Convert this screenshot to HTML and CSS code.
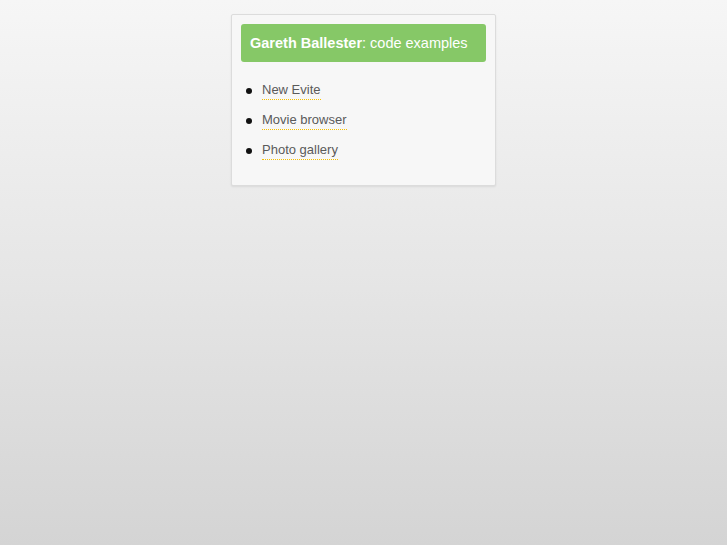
FILE: index.html
```html
<!DOCTYPE html>
<html>
  <head>
    <title>Gareth Ballester: code examples</title>
    <link rel="stylesheet" href="styles.css">
  </head>
  <body>
    <div class="panel">
      <h1 class="panel-title"><strong>Gareth Ballester</strong>: code examples</h1>
      <ul class="links">
        <li><a href="#">New Evite</a></li>
        <li><a href="#">Movie browser</a></li>
        <li><a href="#">Photo gallery</a></li>
      </ul>
    </div>
  </body>
</html>
```
FILE: styles.css
```css
html {
  min-height: 100%;
  background: linear-gradient(to bottom, #f6f6f6 0%, #e6e6e6 50%, #d4d4d4 100%);
}
body {
  font-family: "Liberation Sans", Arial, sans-serif;
  margin: 0;
  padding: 14px 0 0;
  min-height: 545px;
  box-sizing: border-box;
  display: flex;
  flex-direction: column;
  align-items: center;
}
.panel {
  width: 265px;
  box-sizing: border-box;
  background-color: #f7f7f7;
  border: 1px solid #dcdcdc;
  border-radius: 2px;
  box-shadow: 0 1px 2px rgba(0, 0, 0, 0.08);
  padding: 9px 9px 25px;
}
.panel-title {
  margin: 0;
  background-color: #86c867;
  border-radius: 3px;
  color: #fff;
  font-size: 14.5px;
  font-weight: normal;
  line-height: 38px;
  padding: 0 9px;
}
.panel-title strong {
  font-weight: bold;
}
.links {
  list-style: none;
  margin: 20px 0 0;
  padding: 0 0 0 5px;
  font-size: 13px;
}
.links li {
  display: flex;
  align-items: center;
  line-height: 15px;
  margin-bottom: 12px;
}
.links li::before {
  content: "";
  width: 6px;
  height: 6px;
  border-radius: 50%;
  background-color: #111;
  margin-right: 10px;
  margin-top: -1px;
}
.links li:last-child {
  margin-bottom: 0;
}
.links a {
  color: #5a5a5a;
  text-decoration: none;
  border-bottom: 1px dotted #f5c000;
  padding-bottom: 2px;
}
```
